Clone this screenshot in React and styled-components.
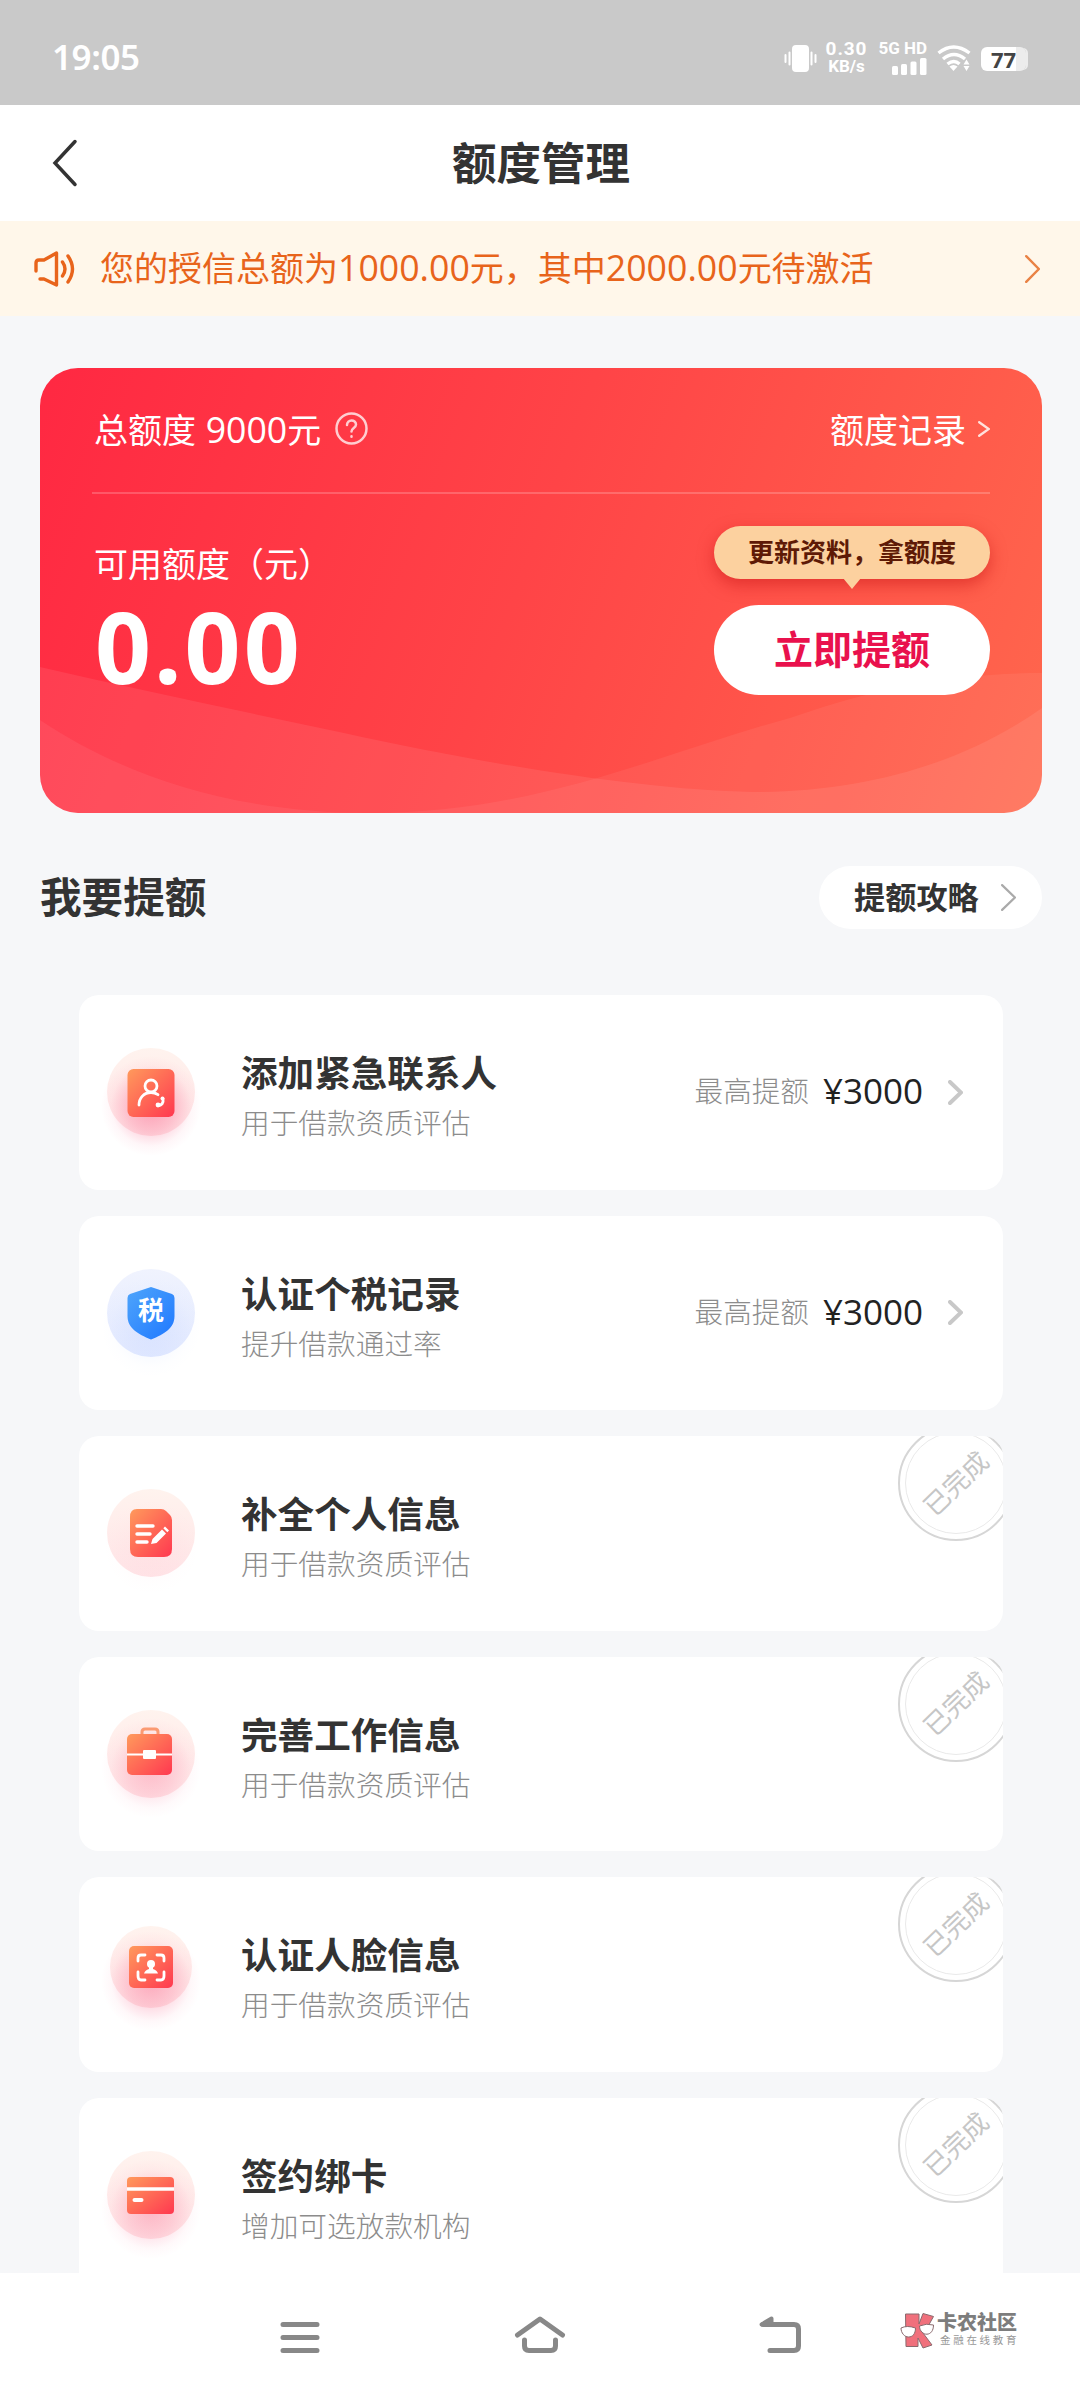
import React from "react";
import styled, { createGlobalStyle } from "styled-components";

const GlobalStyle = createGlobalStyle`
  * {
    box-sizing: border-box;
  }
  body {
    margin: 0;
    background: #f6f7f9;
    font-family: "Noto Sans CJK SC", sans-serif;
    color: #333;
  }
  svg {
    display: block;
    flex: none;
  }
`;

const Page = styled.div`
  display: flex;
  flex-direction: column;
  width: 1080px;
  height: 2400px;
  overflow: hidden;
  white-space: nowrap;
`;

/* status bar */

const StatusBar = styled.div`
  flex: none;
  display: flex;
  align-items: center;
  height: 105px;
  padding: 10px 51px 0 52px;
  background: #c9c9c9;
  color: #fff;
`;

const Clock = styled.div`
  flex: 1;
  font-family: "Noto Sans", sans-serif;
  font-size: 35px;
  font-weight: 600;
  line-height: 40px;
  letter-spacing: -0.4px;
  padding-bottom: 2px;
`;

const StatusIcons = styled.div`
  display: flex;
  align-items: center;
`;

const NetSpeed = styled.div`
  display: flex;
  flex-direction: column;
  align-items: center;
  width: 43px;
  margin: 0 11px 0 8px;
  font-family: Roboto, sans-serif;
  font-weight: 700;
`;

const SpeedValue = styled.span`
  font-size: 19px;
  line-height: 18px;
  letter-spacing: 0.9px;
`;

const SpeedUnit = styled.span`
  font-size: 17px;
  line-height: 17px;
`;

const Signal = styled.div`
  display: flex;
  flex-direction: column;
  align-items: flex-end;
  gap: 3px;
  width: 48px;
  margin-right: 10px;
  font-family: Roboto, sans-serif;
  font-size: 17px;
  font-weight: 700;
  line-height: 14px;
`;

const Battery = styled.div`
  display: flex;
  align-items: center;
  justify-content: center;
  width: 45px;
  height: 24px;
  margin: 3px 3px 0 10px;
  border-radius: 6px;
  background: linear-gradient(90deg, #fff 78%, #ececec 78%);
  box-shadow: 3px 0 0 -1px #ececec;
  color: #444;
  font-family: "Open Sans", sans-serif;
  font-size: 22px;
  font-weight: 700;
`;

/* header and notice */

const Header = styled.div`
  flex: none;
  display: grid;
  grid-template-columns: 120px 1fr 120px;
  align-items: center;
  height: 116px;
  background: #fff;
`;

const BackButton = styled.div`
  padding-left: 52px;
`;

const Title = styled.div`
  padding: 0 0 5px 2px;
  text-align: center;
  font-size: 44.5px;
  font-weight: 700;
  line-height: 60px;
`;

const Notice = styled.div`
  flex: none;
  display: flex;
  align-items: center;
  height: 95px;
  padding: 0 40px 0 34px;
  background: #fff7ea;
  color: #e8641b;
`;

const NoticeText = styled.div`
  flex: 1;
  margin-left: 23px;
  padding-bottom: 5px;
  font-size: 34px;
`;

const Digits = styled.span`
  font-family: "Open Sans", sans-serif;
  font-size: 1.05em;
  line-height: 1;
`;

/* quota card */

const QuotaCard = styled.div`
  position: relative;
  flex: none;
  height: 445px;
  margin: 52px 38px 0 40px;
  padding: 0 52px;
  border-radius: 38px;
  overflow: hidden;
  background: linear-gradient(110deg, #ff2842 0%, #ff4447 48%, #ff674d 100%);
  color: #fff;
`;

const Waves = styled.svg`
  position: absolute;
  left: 0;
  top: 0;
`;

const QuotaTop = styled.div`
  position: relative;
  display: flex;
  align-items: center;
  justify-content: space-between;
  height: 126px;
  padding: 0 0 3px 2px;
  border-bottom: 2px solid rgba(255, 255, 255, 0.2);
  font-size: 34px;
`;

const QuotaTotal = styled.div`
  display: flex;
  align-items: center;
  gap: 14px;
  word-spacing: 2px;
`;

const RecordLink = styled.div`
  display: flex;
  align-items: center;
  gap: 12px;
`;

const QuotaBody = styled.div`
  position: relative;
  display: flex;
  justify-content: space-between;
`;

const Available = styled.div`
  padding: 44px 0 0 2px;
`;

const AvailableLabel = styled.div`
  font-size: 34px;
  line-height: 50px;
`;

const AvailableValue = styled.div`
  margin: 22px 0 0 1px;
  font-family: "Noto Sans", sans-serif;
  font-size: 98px;
  font-weight: 700;
  line-height: 72px;
  letter-spacing: 3px;
`;

const QuotaActions = styled.div`
  display: flex;
  flex-direction: column;
  gap: 26px;
  width: 276px;
  padding-top: 32px;
`;

const Tip = styled.div`
  position: relative;
  height: 53px;
  border-radius: 27px;
  background: #fcd19f;
  box-shadow: 0 6px 16px rgba(200, 20, 20, 0.5);
  color: #5e1a06;
  font-size: 26px;
  font-weight: 600;
  line-height: 50px;
  text-align: center;

  &::after {
    content: "";
    position: absolute;
    left: 129px;
    top: 52px;
    border: 9.5px solid transparent;
    border-top: 11px solid #fcd19f;
    border-bottom: 0;
  }
`;

const RaiseButton = styled.div`
  height: 90px;
  border-radius: 45px;
  background: #fff;
  color: #e9114d;
  font-size: 39px;
  font-weight: 700;
  line-height: 84px;
  text-align: center;
`;

/* task list */

const SectionHead = styled.div`
  flex: none;
  display: flex;
  align-items: center;
  justify-content: space-between;
  height: 63px;
  margin: 53px 38px 66px 40px;
`;

const SectionTitle = styled.div`
  padding-bottom: 5px;
  font-size: 41.6px;
  font-weight: 700;
`;

const GuideButton = styled.div`
  display: flex;
  align-items: center;
  justify-content: space-between;
  width: 223px;
  height: 63px;
  padding: 0 26px 0 35px;
  border-radius: 32px;
  background: #fff;
  font-size: 31.2px;
  font-weight: 700;
  line-height: 44px;

  span {
    padding-bottom: 4px;
  }
`;

const TaskList = styled.div`
  flex: 1;
  display: flex;
  flex-direction: column;
  gap: 26px;
  min-height: 0;
  padding: 0 77px 0 79px;
  overflow: hidden;
`;

const Task = styled.div`
  position: relative;
  flex: none;
  display: flex;
  align-items: center;
  height: 194.5px;
  padding: 0 40px 0 18px;
  border-radius: 20px;
  background: #fff;
  overflow: hidden;
`;

const IconSlot = styled.div`
  flex: none;
  width: 109px;
  height: 120px;

  svg {
    margin: -15px 0;
  }
`;

const TaskText = styled.div`
  flex: 1;
  margin-left: 35px;
  padding-bottom: 4px;
`;

const TaskTitle = styled.div`
  font-size: 36.6px;
  font-weight: 700;
  line-height: 54px;
`;

const TaskDesc = styled.div`
  margin: 2px 0 -8px;
  color: #8c8c8c;
  font-size: 28.7px;
  font-weight: 300;
  line-height: 42px;
`;

const Reward = styled.div`
  display: flex;
  align-items: center;
  color: #8c8c8c;
  font-size: 28.6px;
  font-weight: 300;
  line-height: 42px;
`;

const RewardLabel = styled.span`
  padding-bottom: 4px;
`;

const RewardAmount = styled.span`
  margin: 0 25px 0 14px;
  padding-bottom: 2px;
  color: #222;
  font-family: "Open Sans", sans-serif;
  font-size: 35px;
  font-weight: 400;
`;

const Stamp = styled.div`
  position: absolute;
  left: 819px;
  top: -11px;
  display: flex;
  align-items: center;
  justify-content: center;
  width: 116px;
  height: 116px;
  border: 2px solid #d6d6d6;
  border-radius: 50%;

  &::before {
    content: "";
    position: absolute;
    inset: 5px;
    border: 1px solid #e9e9e9;
    border-radius: 50%;
  }
`;

const StampText = styled.span`
  transform: rotate(-44deg);
  padding-bottom: 3px;
  color: #c6c6c6;
  font-size: 26px;
  line-height: 30px;
`;

/* bottom navigation */

const NavBar = styled.div`
  position: relative;
  flex: none;
  display: grid;
  grid-template-columns: 240px 240px 240px;
  justify-content: center;
  justify-items: center;
  height: 127px;
  padding-top: 39px;
  background: #fff;
`;

const Watermark = styled.div`
  position: absolute;
  left: 900px;
  top: 38px;
  display: flex;
  gap: 3px;
`;

const BrandText = styled.div`
  display: flex;
  flex-direction: column;
  color: #7d7d7d;
`;

const BrandName = styled.span`
  font-size: 20px;
  font-weight: 900;
  line-height: 22px;
`;

const BrandSlogan = styled.span`
  margin: 1px 0 0 3px;
  color: #989898;
  font-size: 10.5px;
  line-height: 12px;
  letter-spacing: 2.7px;
`;

const Chevron = ({ width, height, stroke, color }) => (
  <svg width={width} height={height} fill="none" stroke={color} strokeWidth={stroke} strokeLinecap="round">
    <path d={`M${stroke / 2} ${stroke / 2}L${width - stroke / 2} ${height / 2}L${stroke / 2} ${height - stroke / 2}`} />
  </svg>
);

// halo circle with a soft glow under the glyph; children gets the gradient fill
const IconBase = ({ id, blue, glow, r = 44, cy = 60, children }) => (
  <svg width="130" height="150" viewBox="0 -15 130 150">
    <defs>
      <linearGradient id={`${id}-fill`} x1="0" y1="0" x2="1" y2="1">
        <stop offset="0" stopColor={blue ? "#4fa5fb" : "#ff9a5c"} />
        <stop offset="1" stopColor={blue ? "#1f78ff" : "#ff3850"} />
      </linearGradient>
      <linearGradient id={`${id}-halo`} x1="0" y1="0" x2="0" y2="1">
        <stop offset="0" stopColor={blue ? "#f0f3fe" : "#fff3ee"} />
        <stop offset="1" stopColor={blue ? "#e2e9ff" : "#ffe4e7"} />
      </linearGradient>
      <radialGradient id={`${id}-glow`}>
        <stop offset="0" stopColor={blue ? "#7ea2ff" : "#f8507c"} stopOpacity={glow} />
        <stop offset="0.5" stopColor={blue ? "#7ea2ff" : "#f8507c"} stopOpacity={glow * 0.5} />
        <stop offset="0.8" stopColor={blue ? "#7ea2ff" : "#f8507c"} stopOpacity={glow * 0.1} />
        <stop offset="1" stopColor={blue ? "#7ea2ff" : "#f8507c"} stopOpacity="0" />
      </radialGradient>
    </defs>
    <circle cx="54" cy={cy} r={r} fill={`url(#${id}-halo)`} />
    <circle cx="54" cy={cy + 14} r="50" fill={`url(#${id}-glow)`} />
    {children(`url(#${id}-fill)`)}
  </svg>
);

const ContactIcon = () => (
  <IconBase id="contact" glow={0.5}>
    {(fill) => (
      <>
        <rect x="30.5" y="37" width="47" height="48" rx="6" fill={fill} />
        <g fill="none" stroke="#fff" strokeWidth="2.8" strokeLinecap="round">
          <circle cx="54" cy="54" r="6" />
          <path d="M42 73c0-7 5-12.5 12-12.5 2.5 0 5 .8 7 2.200" />
          <path d="M66 67c.8 4-1.500 6.500-5 6.500" />
        </g>
        <circle cx="65.5" cy="66.500" r="2" fill="#fff" />
        <circle cx="61" cy="73" r="2.400" fill="#fff" />
      </>
    )}
  </IconBase>
);

const TaxIcon = () => (
  <IconBase id="tax" blue glow={0.12}>
    {(fill) => (
      <>
        <path
          d="M54 34l21 7q2.500 1 2.500 4v18c0 12-10 18-23.500 23.500C40.500 81 30.500 75 30.500 63V45q0-3 2.500-4z"
          fill={fill}
        />
        <text x="54" y="67" fill="#fff" fontSize="26" fontWeight="700" textAnchor="middle">
          税
        </text>
      </>
    )}
  </IconBase>
);

const FormIcon = () => (
  <IconBase id="form" glow={0.04}>
    {(fill) => (
      <>
        <path d="M40 36h24q3 0 5 2l4 4q2 2 2 5v29q0 8-8 8H41q-8 0-8-8V44q0-8 7-8z" fill={fill} />
        <g stroke="#fff" strokeWidth="3.4" strokeLinecap="round">
          <path d="M40 53h16M40 61h13M40 69h10" />
        </g>
        <path d="M54 71l1.500-5L65 56.500l4 4-9.500 9.500zM66.300 55.200l1.700-1.700 4 4-1.700 1.700z" fill="#fff" />
      </>
    )}
  </IconBase>
);

const BriefcaseIcon = () => (
  <IconBase id="briefcase" glow={0.3}>
    {(fill) => (
      <>
        <path d="M45 41v-3q0-3 3-3h10q3 0 3 3v3" fill="none" stroke="#fb9a72" strokeWidth="3" />
        <rect x="30" y="40" width="45" height="41" rx="5" fill={fill} />
        <path d="M30 60.500h45" stroke="#fff" strokeWidth="2.2" />
        <rect x="46" y="56" width="13" height="9" rx="1" fill="#fff" />
      </>
    )}
  </IconBase>
);

const FaceIcon = () => (
  <IconBase id="face" glow={0.42} r={41} cy={53}>
    {(fill) => (
      <>
        <rect x="32" y="32" width="44" height="42" rx="5" fill={fill} />
        <path
          d="M41 47v-3q0-3 3-3h4M60 41h4q3 0 3 3v3M41 58v4q0 4 3 4h4M60 66h4q3 0 3-4v-4"
          fill="none"
          stroke="#fff"
          strokeWidth="2.8"
          strokeLinecap="round"
        />
        <circle cx="54" cy="50" r="4" fill="#fff" />
        <path d="M52 52h4v3q4 1 5 4.500H47q1-3.500 5-4.500z" fill="#fff" />
      </>
    )}
  </IconBase>
);

const CardIcon = () => (
  <IconBase id="card" glow={0.34}>
    {(fill) => (
      <>
        <rect x="30" y="42" width="47" height="37" rx="4" fill={fill} />
        <path d="M30 54h47" stroke="#fff" strokeWidth="3.5" />
        <path d="M37.500 65h7" stroke="#fff" strokeWidth="4" strokeLinecap="round" />
      </>
    )}
  </IconBase>
);

const tasks = [
  { icon: ContactIcon, title: "添加紧急联系人", desc: "用于借款资质评估", amount: "¥3000" },
  { icon: TaxIcon, title: "认证个税记录", desc: "提升借款通过率", amount: "¥3000" },
  { icon: FormIcon, title: "补全个人信息", desc: "用于借款资质评估" },
  { icon: BriefcaseIcon, title: "完善工作信息", desc: "用于借款资质评估" },
  { icon: FaceIcon, title: "认证人脸信息", desc: "用于借款资质评估" },
  { icon: CardIcon, title: "签约绑卡", desc: "增加可选放款机构" },
];

const App = () => {
  return (
    <Page>
      <GlobalStyle />
      <StatusBar>
        <Clock>19:05</Clock>
        <StatusIcons>
          <svg width="33" height="28" viewBox="0 0 33 28" stroke="#fff" strokeWidth="2" strokeLinecap="round">
            <rect x="9" y="2" width="15" height="25" rx="3" fill="#fff" />
            <path d="M1.500 11v7M5.500 8.500v12M27.500 8.500v12M31.500 11v7" />
          </svg>
          <NetSpeed>
            <SpeedValue>0.30</SpeedValue>
            <SpeedUnit>KB/s</SpeedUnit>
          </NetSpeed>
          <Signal>
            5G HD
            <svg width="36" height="17" fill="#fff">
              <rect x="1" y="8" width="6" height="9" rx="1.5" />
              <rect x="10" y="6" width="6" height="11" rx="1.5" />
              <rect x="19.5" y="3.5" width="6" height="13.5" rx="1.5" />
              <rect x="29" y="0" width="6.5" height="17" rx="1.5" />
            </svg>
          </Signal>
          <svg width="34" height="28" viewBox="0 0 34 28" fill="none" stroke="#fff" strokeWidth="3.4">
            <path d="M1.500 9q15-12 31 0M6 15q11-9 22 0M10.500 20q6.500-5 12 0" />
            <path d="M12.500 22.500q4-3 8 0L16.500 27z" fill="#fff" stroke="none" />
            <path d="M26.500 20.500l3-5 3 5zM26.500 22l3 5 3-5z" fill="#fff" stroke="none" />
          </svg>
          <Battery>77</Battery>
        </StatusIcons>
      </StatusBar>

      <Header>
        <BackButton>
          <svg width="26" height="48" fill="none" stroke="#333" strokeWidth="3.5" strokeLinecap="round">
            <path d="M23 2.500L3 24L23 45.500" />
          </svg>
        </BackButton>
        <Title>额度管理</Title>
      </Header>

      <Notice>
        <svg
          width="43"
          height="36"
          viewBox="0 0 43 36"
          fill="none"
          stroke="#e8641b"
          strokeWidth="3.4"
          strokeLinecap="round"
          strokeLinejoin="round"
        >
          <path d="M2 20v-8q0-3 3-3h5L22.500 2v32L10 28H6" />
          <path d="M28.500 11q5 7 0 14M34 5q9 13 0 26" />
        </svg>
        <NoticeText>
          您的授信总额为<Digits>1000.00</Digits>元，其中<Digits>2000.00</Digits>元待激活
        </NoticeText>
        <Chevron width={15} height={28} stroke={2.4} color="#e98244" />
      </Notice>

      <QuotaCard>
        <Waves width="1002" height="445" fill="#fff">
          <path
            fillOpacity="0.08"
            d="M0 299C100 322 200 343 304 365C440 395 600 422 713 424C820 424 920 398 1002 340V445H0z"
          />
          <path
            fillOpacity="0.06"
            d="M0 352C90 412 200 445 330 445C500 445 620 385 750 350C840 318 920 305 1002 305V445H0z"
          />
        </Waves>
        <QuotaTop>
          <QuotaTotal>
            <span>
              总额度 <Digits>9000</Digits>元
            </span>
            <svg
              width="33"
              height="33"
              viewBox="0 0 33 33"
              fill="none"
              stroke="#fff"
              strokeOpacity="0.75"
              strokeWidth="2.5"
              strokeLinecap="round"
            >
              <circle cx="16.5" cy="16.5" r="15" />
              <path d="M12 13c0-6 9-6 9-.5 0 3.500-4.500 3.500-4.500 7M16.500 24.300v.4" />
            </svg>
          </QuotaTotal>
          <RecordLink>
            额度记录
            <Chevron width={12} height={16} stroke={2.4} color="#ffe1dc" />
          </RecordLink>
        </QuotaTop>
        <QuotaBody>
          <Available>
            <AvailableLabel>可用额度（元）</AvailableLabel>
            <AvailableValue>0.00</AvailableValue>
          </Available>
          <QuotaActions>
            <Tip>更新资料，拿额度</Tip>
            <RaiseButton>立即提额</RaiseButton>
          </QuotaActions>
        </QuotaBody>
      </QuotaCard>

      <SectionHead>
        <SectionTitle>我要提额</SectionTitle>
        <GuideButton>
          <span>提额攻略</span>
          <Chevron width={15} height={27} stroke={2.2} color="#aaa" />
        </GuideButton>
      </SectionHead>

      <TaskList>
        {tasks.map(({ icon: Icon, title, desc, amount }) => (
          <Task key={title}>
            <IconSlot>
              <Icon />
            </IconSlot>
            <TaskText>
              <TaskTitle>{title}</TaskTitle>
              <TaskDesc>{desc}</TaskDesc>
            </TaskText>
            {amount ? (
              <Reward>
                <RewardLabel>最高提额</RewardLabel>
                <RewardAmount>{amount}</RewardAmount>
                <Chevron width={15} height={25} stroke={4} color="#c8c8c8" />
              </Reward>
            ) : (
              <Stamp>
                <StampText>已完成</StampText>
              </Stamp>
            )}
          </Task>
        ))}
      </TaskList>

      <NavBar>
        <svg width="50" height="46" fill="none" stroke="#888" strokeWidth="5" strokeLinecap="round">
          <path d="M8 12.500h34M8 25.500h34M8 38.500h34" />
        </svg>
        <svg
          width="52"
          height="46"
          fill="none"
          stroke="#888"
          strokeWidth="5"
          strokeLinecap="round"
          strokeLinejoin="round"
        >
          <path d="M3.500 23L26 7L48.500 23" />
          <path d="M10.500 28v6q0 4.500 4.500 4.500h22q4.500 0 4.500-4.500v-6" />
        </svg>
        <svg width="44" height="46" fill="none" stroke="#888" strokeWidth="5" strokeLinecap="round">
          <path d="M5 12.500h31q4.500 0 4.500 4.500v17q0 4.500-4.500 4.500H12" />
          <path d="M3.500 12.500L13.500 6.500V12z" fill="#888" strokeWidth="4" strokeLinejoin="round" />
        </svg>
        <Watermark>
          <svg width="34" height="38" viewBox="0 0 34 38" stroke="#8a6a6e" strokeWidth="1">
            <path d="M5.500 3h13.500v10L23 2.500l10.500 3L26 19l-3 3 9 12-9 3-5-10v8.500H6z" fill="#f0707c" />
            <path
              d="M1 17q6-3 14.500 0c0 6-3 9-7 9s-7.500-4-7.500-9zM19.500 15q7-3 14-1c0 6-3 9-6.500 9.200s-7.500-3-7.500-8.200z"
              fill="#fff"
            />
          </svg>
          <BrandText>
            <BrandName>卡农社区</BrandName>
            <BrandSlogan>金融在线教育</BrandSlogan>
          </BrandText>
        </Watermark>
      </NavBar>
    </Page>
  );
};

export default App;
